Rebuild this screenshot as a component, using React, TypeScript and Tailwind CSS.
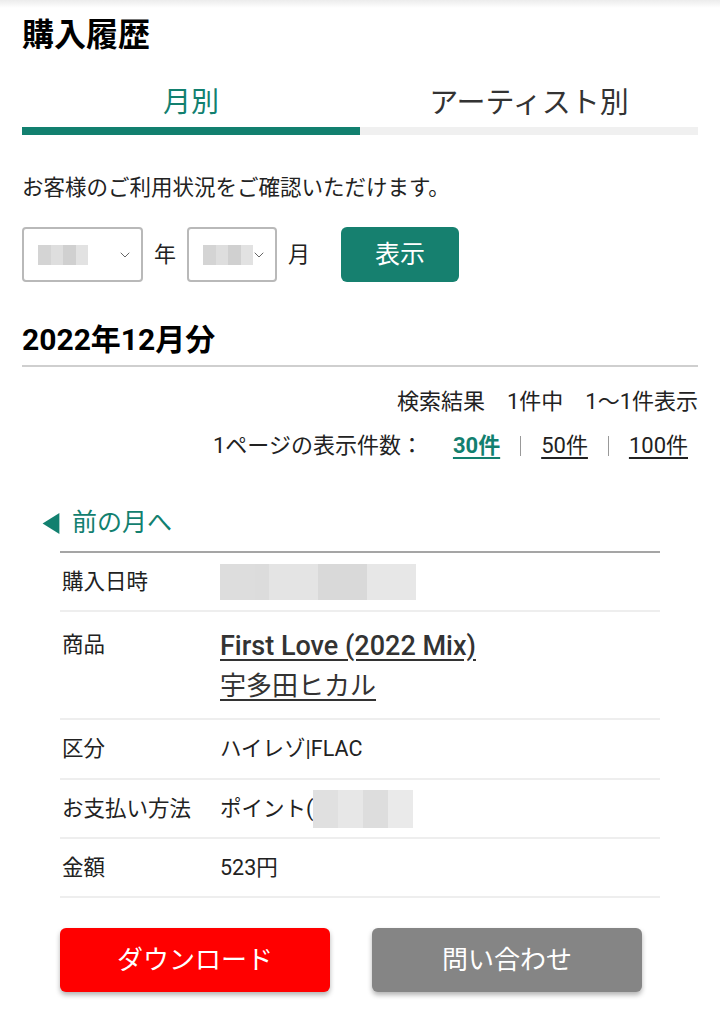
import { ChevronDown } from "lucide-react";

const FONT = "font-['Roboto','Noto_Sans_CJK_JP',sans-serif]";

function Blur({ className }: { className: string }) {
  // pixelated, censored area in the reference
  return (
    <div className={`flex ${className}`}>
      <div className="flex-1 bg-[#d4d4d4]" />
      <div className="flex-1 bg-[#dedede]" />
      <div className="flex-1 bg-[#d0d0d0]" />
      <div className="flex-1 bg-[#e2e2e2]" />
    </div>
  );
}

function Select({ width }: { width: string }) {
  return (
    <div
      className={`relative flex h-[55px] items-center rounded-[4px] border-2 border-[#b9b9b9] bg-white ${width}`}
    >
      <Blur className="ml-[14px] h-[20px] w-[50px]" />
      <ChevronDown
        className="absolute right-[8px] h-[16px] w-[16px] text-[#666]"
        strokeWidth={1.5}
      />
    </div>
  );
}

type Row = { label: string; value: React.ReactNode; h: string };

export default function App() {
  const rows: Row[] = [
    {
      label: "購入日時",
      h: "h-[59px]",
      value: <Blur className="h-[36px] w-[196px] opacity-80" />,
    },
    {
      label: "商品",
      h: "h-[108px] items-start pt-[18px]",
      value: (
        <div className="flex flex-col">
          <span className="text-[27px] font-medium leading-[32px] text-[#333] underline underline-offset-[4px]">
            First Love (2022 Mix)
          </span>
          <span className="mt-[8px] text-[26px] leading-[32px] text-[#333] underline underline-offset-[4px]">
            宇多田ヒカル
          </span>
        </div>
      ),
    },
    { label: "区分", h: "h-[60px]", value: "ハイレゾ|FLAC" },
    {
      label: "お支払い方法",
      h: "h-[59px]",
      value: (
        <div className="flex items-center">
          <span>ポイント(</span>
          <Blur className="h-[38px] w-[100px] opacity-70" />
        </div>
      ),
    },
    { label: "金額", h: "h-[59px]", value: "523円" },
  ];

  return (
    <div className={`min-h-[1020px] w-[720px] bg-white ${FONT} text-[#222]`}>
      <div className="h-[8px] bg-gradient-to-b from-[#ececec] to-white" />
      <div className="px-[22px]">
        <h1 className="mt-[7px] text-[32px] font-bold leading-[40px] text-black">
          購入履歴
        </h1>

        <div className="mt-[28px] grid grid-cols-2">
          <div className="flex flex-col">
            <span className="text-center text-[28px] leading-[40px] text-[#12806f]">
              月別
            </span>
            <div className="mt-[4px] h-[8px] bg-[#12806f]" />
          </div>
          <div className="flex flex-col">
            <span className="text-center text-[29px] leading-[40px] text-[#333]">
              アーティスト別
            </span>
            <div className="mt-[4px] h-[8px] bg-[#f0f0f0]" />
          </div>
        </div>

        <p className="mt-[38px] text-[21.5px] leading-[30px] text-[#222]">
          お客様のご利用状況をご確認いただけます。
        </p>

        <div className="mt-[24px] flex items-center">
          <Select width="w-[121px]" />
          <span className="mx-[11px] text-[22px] text-[#222]">年</span>
          <Select width="w-[90px]" />
          <span className="ml-[11px] text-[22px] text-[#222]">月</span>
          <button className="ml-[31px] h-[55px] w-[118px] rounded-[6px] bg-[#16806f] text-[25px] text-white">
            表示
          </button>
        </div>

        <h2 className="mt-[40px] border-b-2 border-[#cfcfcf] pb-[7px] text-[30px] font-bold leading-[36px] text-black">
          2022年12月分
        </h2>

        <p className="mt-[20px] text-right text-[22px] leading-[30px] text-[#222]">
          検索結果　1件中　1〜1件表示
        </p>

        <div className="mt-[14px] flex items-center justify-end pr-[10px] text-[22px] leading-[30px] text-[#222]">
          <span>1ページの表示件数：</span>
          <a className="ml-[30px] font-bold text-[#12806f] underline underline-offset-[4px]">
            30件
          </a>
          <span className="mx-[20px] h-[20px] w-px bg-[#999]" />
          <a className="underline underline-offset-[4px]">50件</a>
          <span className="mx-[20px] h-[20px] w-px bg-[#999]" />
          <a className="underline underline-offset-[4px]">100件</a>
        </div>

        <a className="ml-[20px] mt-[46px] flex items-center text-[25px] leading-[32px] text-[#12806f]">
          <svg viewBox="0 0 16 20" className="mr-[12px] h-[21px] w-[18px]">
            <path d="M16 0L0 10l16 10z" fill="currentColor" />
          </svg>
          前の月へ
        </a>

        <div className="mx-[38px] mt-[12px] border-t-2 border-[#a5a5a5] text-[21.5px] text-[#222]">
          {rows.map((r) => (
            <div
              key={r.label}
              className={`flex items-center border-b-2 border-[#eeeeee] pl-[2px] ${r.h}`}
            >
              <span className="w-[158px] shrink-0 leading-[30px]">{r.label}</span>
              <div className="leading-[30px]">{r.value}</div>
            </div>
          ))}
        </div>

        <div className="mx-[38px] mt-[30px] flex gap-[42px]">
          <button className="h-[64px] w-[270px] rounded-[6px] bg-[#ff0000] text-[26px] text-white shadow-[0_3px_5px_rgba(0,0,0,0.3)]">
            ダウンロード
          </button>
          <button className="h-[64px] w-[270px] rounded-[6px] bg-[#858585] text-[26px] text-white shadow-[0_3px_5px_rgba(0,0,0,0.3)]">
            問い合わせ
          </button>
        </div>
      </div>
    </div>
  );
}
